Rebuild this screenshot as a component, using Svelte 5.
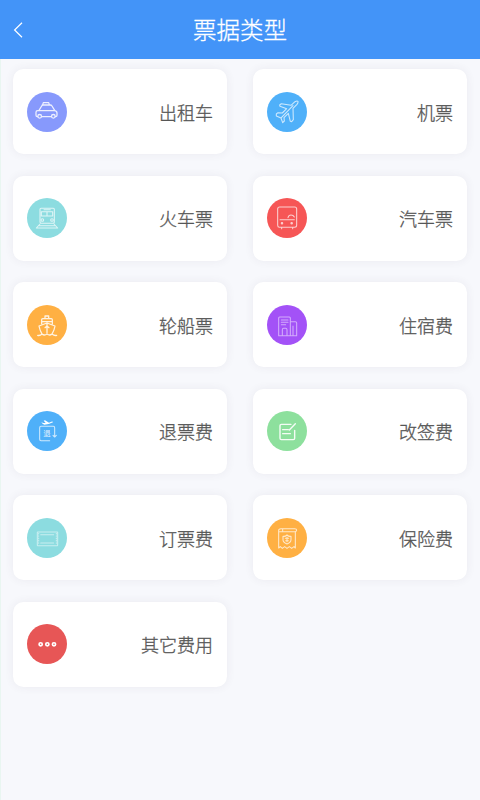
<script>
  const items = [
    { label: '出租车', color: '#8799fc', icon: 'taxi' },
    { label: '机票', color: '#4fb0f9', icon: 'plane' },
    { label: '火车票', color: '#8cdce0', icon: 'train' },
    { label: '汽车票', color: '#f65656', icon: 'bus' },
    { label: '轮船票', color: '#ffb043', icon: 'ship' },
    { label: '住宿费', color: '#a352f7', icon: 'hotel' },
    { label: '退票费', color: '#4fb0f9', icon: 'refund' },
    { label: '改签费', color: '#8de09d', icon: 'edit' },
    { label: '订票费', color: '#8cdce0', icon: 'ticket' },
    { label: '保险费', color: '#ffb043', icon: 'insurance' },
    { label: '其它费用', color: '#e75656', icon: 'more' },
  ];
</script>

<div class="page">
  <header>
    <svg class="back" viewBox="0 0 10 16"><path d="M9 .8 1.6 8 9 15.2" /></svg>
    <h1>票据类型</h1>
  </header>
  <main>
    {#each items as item}
      <div class="card">
        <svg class="icon" viewBox="14 12 120 120">
          <circle class="disc" cx="74" cy="72" r="60" style:fill={item.color} />
          {#if item.icon === 'taxi'}
            <g class="line">
              <path d="M46 86h-1q-4 0-4-4V73q0-5 5-5h50q8 1 8 7v7q0 4-4 4h-1M58 86h28M50 67l8-13q1-3 4-3h22q3 0 5 3l8 13M61 50l2-6h16l2 6" />
              <circle cx="52" cy="85" r="5.5" /><circle cx="93" cy="85" r="5.5" />
            </g>
          {:else if item.icon === 'plane'}
            <g class="line soft">
              <path d="M42 78l5-4 13 1 13-13-20-7-1-4 5-4 29 5 12-11q6-3 9-1 1 4-3 9L92 61l1 34-5 6-4-1-6-24-13 13 1 10-5 5-5-14-14-6zM57 89l35-36" />
            </g>
          {:else if item.icon === 'train'}
            <g class="line soft">
              <path d="M56 43h37q3 0 3 3v38q0 4-4 4H57q-4 0-4-4V46q0-3 3-3zM57 53h34v13H57zM74 53v13M65 47h19M53 90l-11 12M95 90l11 12M49 95h50M42 102h64" />
              <circle cx="60" cy="78" r="4" /><circle cx="89" cy="78" r="4" />
            </g>
          {:else if item.icon === 'bus'}
            <g class="line soft">
              <path d="M52 39h45q6 0 6 6v49q0 6-6 6H51q-5 0-5-6V45q0-6 6-6zM53 77h43M77 71q2-8 9-8 7 0 10 6M58 101v3M91 101v3" />
              <circle class="solid" cx="59" cy="88" r="2.2" /><circle class="solid" cx="88" cy="88" r="2.2" />
            </g>
          {:else if item.icon === 'ship'}
            <g class="line">
              <path d="M68 53v-8h11v8M58 68V56q0-3 3-3h26q3 0 3 3v13M58 62h32M58 97q-6-11-8-22l24-9 24 9q-2 12-8 22M74 68v27M68 80l6-5 6 5M46 103q7 2 13-4 7 6 15 0 8 6 15 0 7 6 14 4" />
            </g>
          {:else if item.icon === 'hotel'}
            <g class="line faint">
              <path d="M49 104V51q0-3 3-3h29q3 0 3 3v53zM84 62h15q4 0 4 4v38H84M57 57h20M57 64h20M57 71h13M60 104V86q0-4 4-4h6q4 0 4 4v18M92 75v29" />
            </g>
          {:else if item.icon === 'refund'}
            <g class="line soft">
              <path d="M82 101H56q-4 0-4-4V62q0-4 4-4h37q4 0 4 4v28M92 85l5 5 5-5" />
            </g>
            <path class="jet" d="M57 46l6 2 7 0-6-7 4-1 12 7 7-3q5-1 5 2-13 7-26 7-6-2-9-7z" />
            <text x="74" y="86" text-anchor="middle">退</text>
          {:else if item.icon === 'edit'}
            <g class="line strong">
              <path d="M86 52H57q-4 0-4 4v38q0 4 4 4h36q4 0 4-4V70M61 68h17M61 80h23M81 69l18-19" />
            </g>
          {:else if item.icon === 'ticket'}
            <g class="line faint">
              <rect x="45" y="54" width="61" height="41" rx="1" />
              <path d="M55 62h39M55 87h39" />
              <path class="perf" d="M49 58v34M102 58v34" />
            </g>
          {:else if item.icon === 'insurance'}
            <g class="line soft">
              <path d="M49 53q-1-9 7-9h41q6 0 6 4t-5 5H52M49 50v52l5-4 6 5 7-5 7 5 7-5 7 5 7-5 4 4V55M61 44v7" />
              <path d="M74 63q5 5 12 4v10q0 8-12 13-12-5-12-13V67q7 1 12-4zM69 73h10M70 80h8M74 70v13" />
            </g>
          {:else}
            <g class="line dots">
              <circle cx="55" cy="73" r="4.8" /><circle cx="75" cy="73" r="4.8" /><circle cx="95" cy="73" r="4.8" />
            </g>
          {/if}
        </svg>
        <span>{item.label}</span>
      </div>
    {/each}
  </main>
</div>

<style>
  :global(body) {
    margin: 0;
    background: #f7f8fc;
  }
  .page {
    box-sizing: border-box;
    min-height: 800px;
    background: linear-gradient(90deg, #e9f6f1 1px, #f7f8fc 1px);
    font-family: "Noto Sans CJK SC", "Noto Sans", sans-serif;
    font-weight: 300;
  }
  header {
    display: grid;
    grid-template-columns: 48px 1fr 48px;
    align-items: center;
    height: 58.5px;
    background: #4394f8;
  }
  .back {
    width: 10px;
    height: 16px;
    margin: 1px 0 0 13px;
    fill: none;
    stroke: #fff;
    stroke-width: 1.2;
  }
  h1 {
    margin: 0;
    color: #fff;
    font-size: 23.5px;
    font-weight: 300;
    -webkit-text-stroke: 0.3px #fff;
    line-height: 34px;
    text-align: center;
  }
  main {
    display: grid;
    grid-template-columns: 1fr 1fr;
    gap: 21.2px 26.6px;
    padding: 10.7px 13.3px;
  }
  .card {
    box-sizing: border-box;
    display: flex;
    align-items: center;
    justify-content: space-between;
    height: 85.3px;
    padding: 0 13.7px 0 13.5px;
    border-radius: 10.5px;
    background: #fff;
    box-shadow: 0 0 10px rgba(70, 60, 90, 0.07);
  }
  .card span {
    padding-bottom: 0.4px;
    color: #565656;
    -webkit-text-stroke: 0.3px #565656;
    font-size: 18px;
    line-height: 26px;
  }
  .icon {
    width: 40px;
    height: 40px;
  }
  .line {
    fill: none;
    stroke: #fff;
    stroke-width: 3.8;
    stroke-linejoin: round;
    stroke-linecap: round;
    opacity: 0.85;
  }
  .soft {
    stroke-width: 3.2;
    opacity: 0.72;
  }
  .faint {
    stroke-width: 3.2;
    opacity: 0.52;
  }
  .strong {
    stroke-width: 4.2;
    opacity: 0.9;
  }
  .dots {
    stroke-width: 5;
    opacity: 1;
  }
  .solid,
  .jet {
    fill: #fff;
  }
  .perf {
    stroke-dasharray: 2 5;
  }
  text {
    fill: #fff;
    fill-opacity: 0.85;
    font-size: 22px;
    font-weight: 400;
  }
</style>
